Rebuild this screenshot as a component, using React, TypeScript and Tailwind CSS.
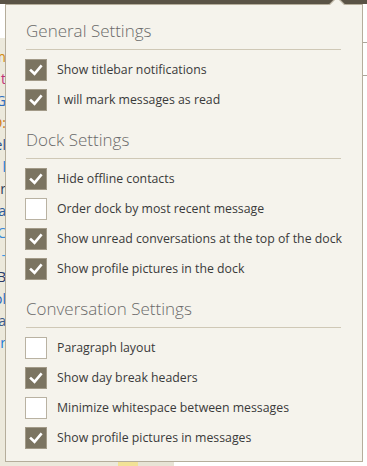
import React from "react";

type Item = { label: string; checked: boolean };

const sections: { title: string; items: Item[] }[] = [
  {
    title: "General Settings",
    items: [
      { label: "Show titlebar notifications", checked: true },
      { label: "I will mark messages as read", checked: true },
    ],
  },
  {
    title: "Dock Settings",
    items: [
      { label: "Hide offline contacts", checked: true },
      { label: "Order dock by most recent message", checked: false },
      { label: "Show unread conversations at the top of the dock", checked: true },
      { label: "Show profile pictures in the dock", checked: true },
    ],
  },
  {
    title: "Conversation Settings",
    items: [
      { label: "Paragraph layout", checked: false },
      { label: "Show day break headers", checked: true },
      { label: "Minimize whitespace between messages", checked: false },
      { label: "Show profile pictures in messages", checked: true },
    ],
  },
];

const edgeText: { t: string; c: string }[] = [
  { t: "m", c: "text-[#d38a10]" },
  { t: "t", c: "text-[#c0307a]" },
  { t: "G", c: "text-[#2f6fc0]" },
  { t: "O:", c: "text-[#d07a10]" },
  { t: "el", c: "text-[#2a4f8a]" },
  { t: "l", c: "text-[#1a7ad8]" },
  { t: "r", c: "text-[#2a3a5a]" },
  { t: "a", c: "text-[#2a5a9a]" },
  { t: "C", c: "text-[#3a8ad8]" },
  { t: "-", c: "text-[#3a9ae8]" },
  { t: " ", c: "" },
  { t: "B", c: "text-[#2a3a6a]" },
  { t: "ol", c: "text-[#2a6ac0]" },
  { t: "ia", c: "text-[#3a5a8a]" },
  { t: "r", c: "text-[#1a7ad8]" },
];

const Checkbox = ({ checked }: { checked: boolean }) =>
  checked ? (
    <div className="w-[22px] h-[22px] shrink-0 bg-[#7b7461] border border-[#a29a88]">
      <svg viewBox="0 0 20 20" className="w-[20px] h-[20px]">
        <polyline
          points="5,10.5 8.5,13.8 14.8,6.3"
          fill="none"
          stroke="#ffffff"
          strokeWidth="2.6"
          strokeLinecap="square"
        />
      </svg>
    </div>
  ) : (
    <div className="w-[22px] h-[22px] shrink-0 bg-white border border-[#b9b2a2]" />
  );

const App = () => {
  return (
    <div
      className="relative w-[367px] h-[466px] overflow-hidden bg-white"
      style={{ fontFamily: "'Open Sans', 'Noto Sans', sans-serif" }}
    >
      {/* page behind the popover */}
      <div className="h-[4px] bg-[#5a5346]" />
      <div className="flex h-[462px]">
        <div className="w-[6px] flex flex-col">
          <div className="h-[34px] bg-white" />
          <div className="flex-1 bg-[#ece9dc] pt-[8px] flex flex-col text-[14px] leading-[22px]">
            {edgeText.map((e, i) => (
              <div key={i} className={`flex justify-end whitespace-nowrap ${e.c}`}>
                {e.t}
              </div>
            ))}
          </div>
        </div>
        <div className="flex-1 flex flex-col">
          <div className="flex-1" />
          <div className="h-[5px] flex">
            <div className="w-[112px] bg-[#ece9dc]" />
            <div className="w-[20px] bg-[#f2e296]" />
            <div className="w-[36px] bg-[#e8e4d6]" />
          </div>
        </div>
        <div className="w-[5px] flex flex-col">
          <div className="h-[38px]" />
          <div className="h-px bg-[#aaa59a]" />
          <div className="h-[32px]" />
          <div className="h-px bg-[#aaa59a]" />
        </div>
      </div>

      {/* popover */}
      <div className="absolute left-[5px] top-[4px] w-[358px] h-[458px] bg-[#f5f3ec] border border-[#b5ad9b] pl-[19px] pt-[13px] text-[#3a3a3a]">
        {sections.map((s, si) => (
          <div key={s.title} className={si > 0 ? "mt-[16px]" : ""}>
            <div className="ml-[1px] w-[315px] pb-[6px] border-b border-[#cfc8b6] text-[17px] font-light leading-[25px] text-[#6a6a6a]">
              {s.title}
            </div>
            <div className="mt-[9px] flex flex-col gap-[8px]">
              {s.items.map((it) => (
                <div key={it.label} className="flex items-center gap-[10px] h-[22px]">
                  <Checkbox checked={it.checked} />
                  <span className="text-[12.3px] whitespace-nowrap">{it.label}</span>
                </div>
              ))}
            </div>
          </div>
        ))}
      </div>

      {/* arrow */}
      <div className="absolute left-[331px] top-[-1px] w-[12px] h-[12px] rotate-45 bg-[#f5f3ec] border-l border-t border-[#b5ad9b]" />
      <div className="absolute left-[327px] top-[5px] w-[20px] h-[6px] bg-[#f5f3ec]" />
    </div>
  );
};

export default App;
